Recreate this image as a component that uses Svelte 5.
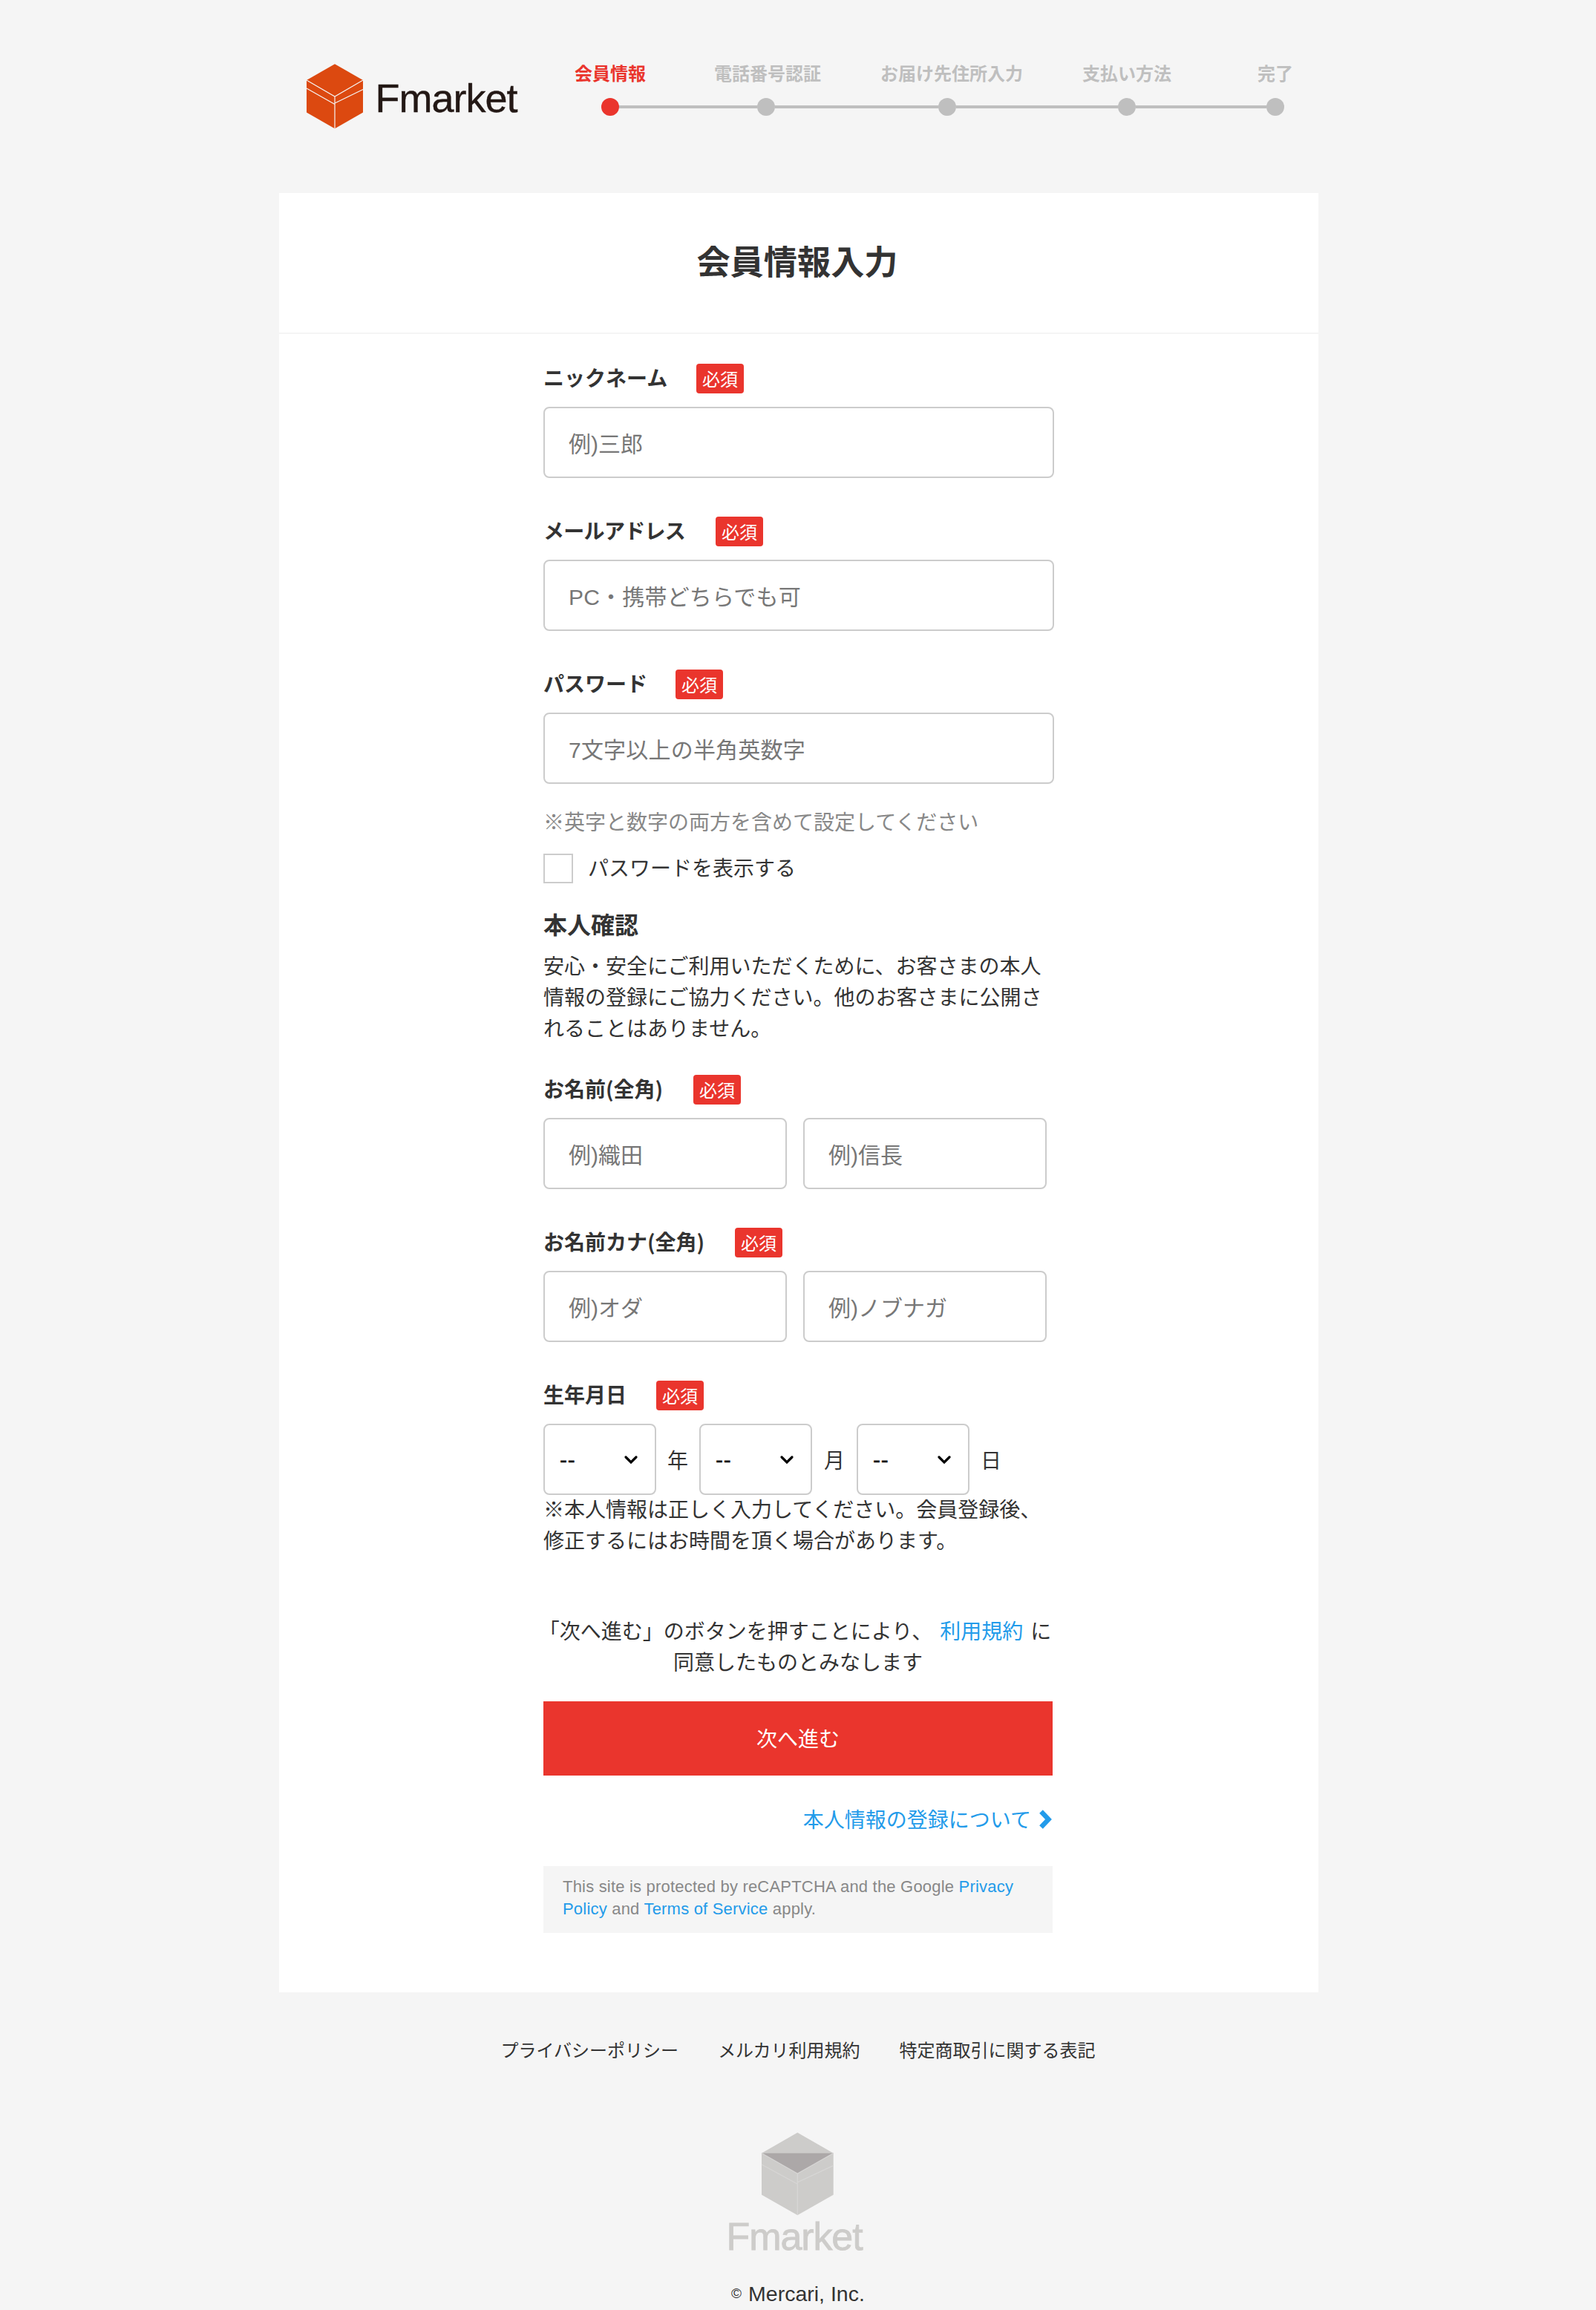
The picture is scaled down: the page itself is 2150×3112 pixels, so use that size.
<script lang="ts">
  type Step = { label: string; cls: string }
  type Field = { id: string; label: string; labelWidth: number; inputs: string[] }

  const steps: Step[] = [
    { label: '会員情報', cls: 'active' },
    { label: '電話番号認証', cls: 'phone' },
    { label: 'お届け先住所入力', cls: 'address' },
    { label: '支払い方法', cls: 'payment' },
    { label: '完了', cls: 'done' },
  ]

  const account: Field[] = [
    { id: 'nickname', label: 'ニックネーム', labelWidth: 166, inputs: ['例)三郎'] },
    { id: 'email', label: 'メールアドレス', labelWidth: 192, inputs: ['PC・携帯どちらでも可'] },
    { id: 'password', label: 'パスワード', labelWidth: 138, inputs: ['7文字以上の半角英数字'] },
  ]

  const identity: Field[] = [
    { id: 'name', label: 'お名前(全角)', labelWidth: 162, inputs: ['例)織田', '例)信長'] },
    { id: 'kana', label: 'お名前カナ(全角)', labelWidth: 218, inputs: ['例)オダ', '例)ノブナガ'] },
  ]

  const birthUnits = ['年', '月', '日']
  const footerLinks = ['プライバシーポリシー', 'メルカリ利用規約', '特定商取引に関する表記']

  let showPassword = $state(false)
</script>

{#snippet fieldLabel(text: string, width: number)}
  <div class="label-row">
    <span class="label" style:width="{width}px">{text}</span>
    <span class="required">必須</span>
  </div>
{/snippet}

{#snippet field(f: Field)}
  <div class={['field', f.id]}>
    {@render fieldLabel(f.label, f.labelWidth)}
    <div class="inputs">
      {#each f.inputs as placeholder}
        <input class={['text-input', f.inputs.length > 1 && 'half']} type="text" {placeholder} />
      {/each}
    </div>
  </div>
{/snippet}

<div class="page">
  <header>
    <svg class="logo" width="300" height="90" viewBox="0 0 300 90">
      <path fill="#dc4910" d="M38 0.3 76 22V65.5L38 87.3 0 65.5V22Z" />
      <path
        fill="none"
        stroke="#f5f5f5"
        stroke-width="1.2"
        d="M0 22 38 44 76 22M0 33 38 54.5M76 34.5 38 53M38 44V87.5"
      />
      <text x="92.5" y="65" font-size="54" letter-spacing="-1" fill="#231815" stroke="#231815" stroke-width="0.4">Fmarket</text>
    </svg>
    <ol class="steps">
      {#each steps as s}
        <li class={s.cls}>
          <span>{s.label}</span>
          <i class="dot"></i>
        </li>
      {/each}
    </ol>
  </header>

  <main>
    <h1>会員情報入力</h1>

    <form>
      {#each account as f}
        {@render field(f)}
      {/each}
      <p class="hint">※英字と数字の両方を含めて設定してください</p>
      <label class="show-password">
        <input type="checkbox" bind:checked={showPassword} />
        <span>パスワードを表示する</span>
      </label>

      <h2>本人確認</h2>
      <p class="lead">安心・安全にご利用いただくために、お客さまの本人<br />情報の登録にご協力ください。他のお客さまに公開さ<br />れることはありません。</p>

      {#each identity as f}
        {@render field(f)}
      {/each}

      <div class="birth">
        {@render fieldLabel('生年月日', 112)}
        <div class="selects">
          {#each birthUnits as unit}
            <div class="select-wrap">
              <select><option>--</option></select>
              <svg width="18" height="12" viewBox="0 0 18 12">
                <path d="M2 2 9 9 16 2" fill="none" stroke="#000" stroke-width="3.2" stroke-linecap="round" />
              </svg>
            </div>
            <span class="unit">{unit}</span>
          {/each}
        </div>
        <p class="birth-note">※本人情報は正しく入力してください。会員登録後、<br />修正するにはお時間を頂く場合があります。</p>
      </div>

      <p class="agree">
        <span class="agree-line">「次へ進む」のボタンを押すことにより、<a class="terms" href="#terms">利用規約</a>に</span>
        同意したものとみなします
      </p>
      <button type="button">次へ進む</button>
      <a class="about" href="#about">
        <span>本人情報の登録について</span>
        <svg width="19" height="28" viewBox="0 0 19 28">
          <path d="M3.5 3.5 13.5 14 3.5 24.5" fill="none" stroke="#239bea" stroke-width="6.4" />
        </svg>
      </a>
      <p class="recaptcha">
        This site is protected by reCAPTCHA and the Google <a href="#privacy">Privacy<br />Policy</a> and <a href="#tos">Terms of Service</a> apply.
      </p>
    </form>
  </main>

  <footer>
    <nav>
      {#each footerLinks as link}
        <a href="#footer">{link}</a>
      {/each}
    </nav>
    <svg class="footer-logo" width="196" height="172" viewBox="0 0 196 172">
      <path fill="#cdccca" d="M98.3 0 146.7 27.7V83.7L98.3 111.3 50 83.7V27.7Z" />
      <path fill="#aca8a8" d="M50 27.7H146.7L98.3 55.3Z" />
      <path
        fill="none"
        stroke="#d7d6d5"
        stroke-width="1.3"
        d="M50 27.7 98.3 55.3 146.7 27.7M50 43 98.3 69.3M146.7 44.3 98.3 67M98.3 55.3V111"
      />
      <text x="2.5" y="158" font-size="52" letter-spacing="-1.1" fill="#cdccca" stroke="#cdccca" stroke-width="0.8">Fmarket</text>
    </svg>
    <p class="copyright"><small>©</small> <span>Mercari, Inc.</span></p>
  </footer>
</div>

<style>
  :global(body) { background: #f5f5f5; }
  .page {
    box-sizing: border-box;
    height: 3112px;
    color: #333;
    font: 28px/42px "Noto Sans CJK JP", sans-serif;
  }
  p, h1, h2, ol { margin: 0; padding: 0; }
  a { color: #239bea; text-decoration: none; }
  svg { overflow: visible; }
  svg text, .text-input, select, .recaptcha, .copyright { font-family: "Liberation Sans", "Noto Sans CJK JP", sans-serif; }
  header, main { width: 1400px; margin: 0 auto; }
  main { position: relative; left: 1px; }

  header { box-sizing: border-box; height: 260px; padding: 86px 0 0 38px; display: flex; }
  .logo { flex: none; margin-right: 61px; }
  .steps { display: flex; list-style: none; margin-top: -6px; font-weight: 700; font-size: 24px; line-height: 36px; color: #bfbfbf; }
  .steps li { position: relative; height: 76px; display: flex; flex-direction: column; align-items: center; justify-content: space-between; white-space: nowrap; }
  .steps li + li::before { content: ""; position: absolute; bottom: 10px; height: 4px; background: #bfbfbf; }
  .dot { width: 24px; height: 24px; border-radius: 50%; background: #bfbfbf; position: relative; }
  .steps .active { color: #ea352d; }
  .active .dot { background: #ea352d; }
  .steps .phone { margin-left: 92px; }
  .phone .dot { left: -2px; }
  .steps .phone::before { left: -128px; width: 186px; }
  .steps .address { margin-left: 80px; }
  .address .dot { left: -6px; }
  .steps .address::before { left: -142px; width: 220px; }
  .steps .payment { margin-left: 80px; }
  .steps .payment::before { left: -170px; width: 218px; }
  .steps .done { margin-left: 116px; }
  .steps .done::before { left: -164px; width: 176px; }

  main { box-sizing: border-box; height: 2424px; background: #fff; }
  h1 { box-sizing: border-box; height: 190px; padding-right: 4px; border-bottom: 2px solid #f5f5f5; font-size: 45.2px; line-height: 181px; text-align: center; }
  form { width: 686px; margin-left: 356px; padding-top: 40px; }

  .field { margin-bottom: 52px; }
  .label-row { display: flex; align-items: center; height: 40px; margin-bottom: 18px; }
  .label { font-weight: 700; white-space: nowrap; margin-right: 40px; padding-bottom: 4px; }
  .email .label { letter-spacing: -0.7px; }
  .required { width: 64px; height: 40px; border-radius: 4px; background: #ea352d; color: #fff; font-size: 24px; line-height: 39px; text-align: center; }
  .inputs { display: flex; gap: 22px; }
  .text-input, select { box-sizing: border-box; height: 96px; border: 2px solid #ccc; border-radius: 8px; background: #fff; }
  .text-input { flex: none; width: 688px; padding: 5px 32px 0; font-size: 30px; }
  .text-input.half { width: 328px; }
  .text-input::placeholder { color: #777; opacity: 1; }
  .email .text-input, .password .text-input { letter-spacing: 0.2px; }

  .hint { margin-top: -23px; color: #888; }
  .show-password { display: flex; align-items: center; gap: 20px; height: 40px; margin-top: 23px; }
  .show-password span { padding-bottom: 5px; }
  .show-password input { appearance: none; box-sizing: border-box; width: 40px; height: 40px; margin: 0; border: 2px solid #ccc; background: #fff; }
  h2 { margin-top: 30px; font-size: 32px; line-height: 48px; }
  .lead { margin: 11px 0 43px; white-space: nowrap; }

  .selects { display: flex; align-items: center; }
  .select-wrap { position: relative; width: 152px; height: 96px; }
  select { appearance: none; width: 152px; margin: 0; padding: 0 20px; font-size: 30px; letter-spacing: 0.7px; color: #000; display: block; -webkit-text-stroke: 0.4px #000; }
  .select-wrap svg { position: absolute; right: 25px; top: 43px; }
  .unit { width: 28px; margin: 0 15px 1px 15px; }
  .unit:nth-child(4) { margin: 0 16px 1px 16px; }
  .birth-note { margin-top: -3px; white-space: nowrap; }

  .agree { margin-top: 80px; text-align: center; white-space: nowrap; }
  .agree-line { display: block; margin-left: -8px; }
  .terms { margin: 0 10px; }
  button { display: block; width: 686px; height: 100px; margin-top: 33px; padding: 0 0 3px; border: 0; background: #ea352d; color: #fff; font: inherit; }
  .about { display: flex; justify-content: flex-end; align-items: center; gap: 10px; height: 42px; margin-top: 38px; }
  .about span { padding-bottom: 2px; }
  .recaptcha { box-sizing: border-box; height: 90px; margin-top: 42px; padding: 13px 26px; background: #f5f5f5; color: #888; font-size: 22px; letter-spacing: 0.2px; line-height: 30px; white-space: nowrap; }

  footer { display: flex; flex-direction: column; align-items: center; }
  nav { display: flex; gap: 53px; margin-top: 59px; font-size: 24px; line-height: 36px; }
  nav a { color: #333; }
  .footer-logo { margin: 94px 3px 0 0; }
  .copyright { display: flex; align-items: center; gap: 9px; margin-top: 24px; font-size: 28.5px; }
  small { font-size: 19px; }
</style>
